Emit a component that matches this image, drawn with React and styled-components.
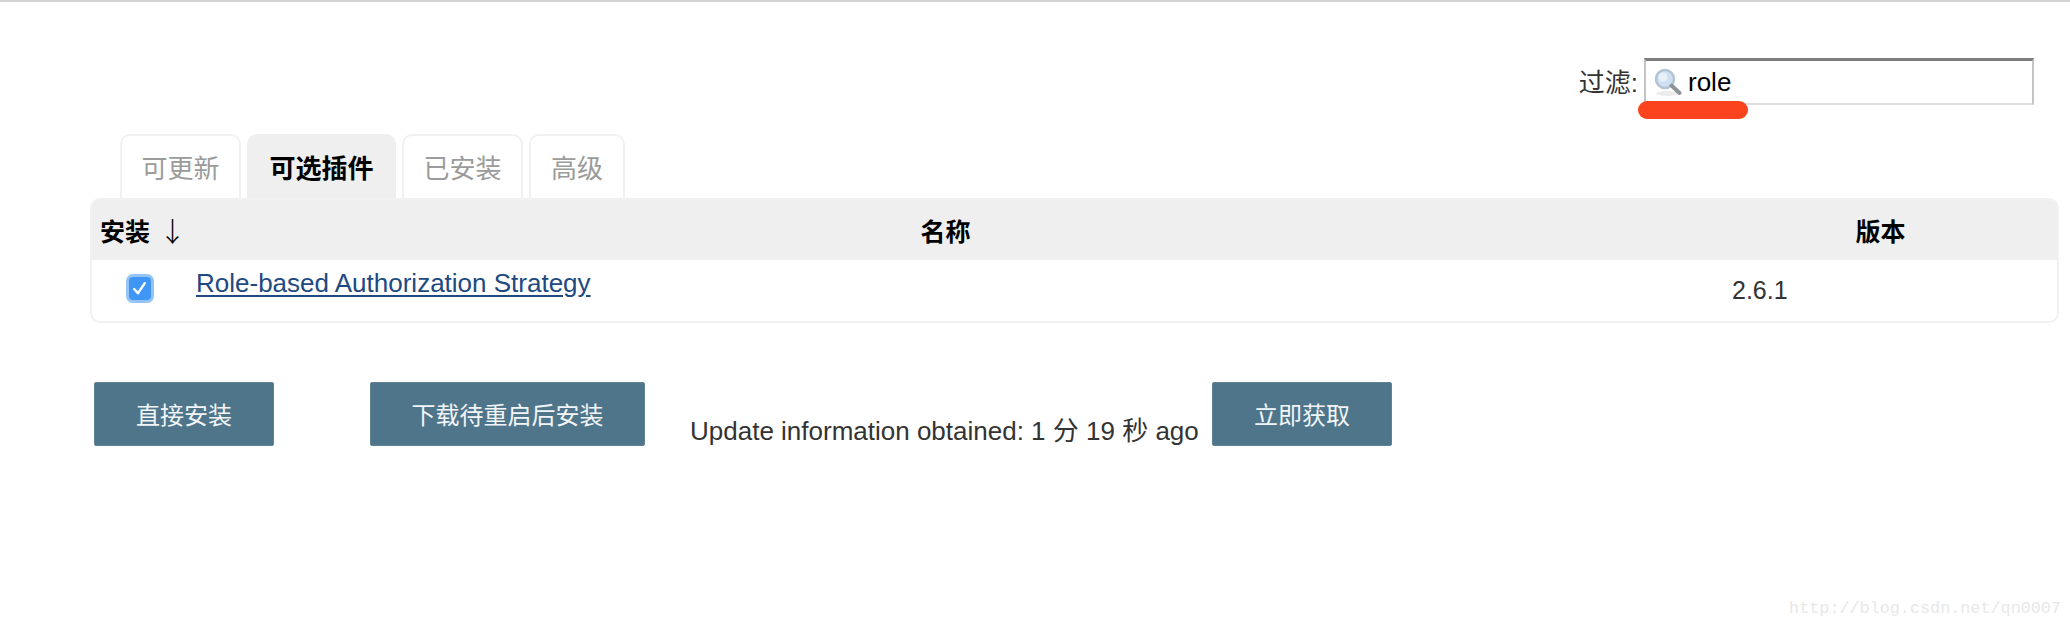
import React from "react";
import styled, { createGlobalStyle } from "styled-components";

const FONT = `"Liberation Sans", "Noto Sans CJK SC", sans-serif`;

const Global = createGlobalStyle`
  html, body { margin: 0; padding: 0; background: #fff; }
  body { font-family: ${FONT}; color: #333; }
`;

const Page = styled.div`
  position: relative;
  width: 2070px;
  height: 626px;
  overflow: hidden;
  box-sizing: border-box;
  border-top: 2px solid #d4d4d4;
  padding-top: 56px;
`;

const FilterBar = styled.div`
  display: flex;
  justify-content: flex-end;
  align-items: center;
  gap: 6px;
  padding-right: 36px;
  height: 47px;
  font-size: 26px;
  color: #333;
`;

const FilterLabel = styled.span`
  padding-bottom: 2px;
`;

const FilterBox = styled.div`
  position: relative;
  width: 390px;
  height: 47px;
  box-sizing: border-box;
  display: flex;
  align-items: center;
  gap: 5px;
  padding-left: 7px;
  border: 2px solid #c4c4c4;
  border-top: 3px solid #7d7d7d;
  border-bottom-color: #dcdcdc;
  color: #000;
  font-size: 26px;
  background: #fff;
`;

const Highlight = styled.span`
  position: absolute;
  left: -8px;
  top: 40px;
  width: 110px;
  height: 18px;
  border-radius: 9px;
  background: #fb431d;
`;

const Tabs = styled.div`
  display: flex;
  gap: 6px;
  margin: 29px 0 0 120px;
  height: 64px;
`;

const Tab = styled.div`
  box-sizing: border-box;
  height: 64px;
  width: ${(p) => p.$w}px;
  display: flex;
  justify-content: center;
  padding-top: 17px;
  font-size: 26px;
  line-height: 32px;
  border-radius: 10px 10px 0 0;
  border: 2px solid ${(p) => (p.$active ? "#efefef" : "#f1f1f1")};
  border-bottom: 0;
  background: ${(p) => (p.$active ? "#efefef" : "#fff")};
  color: ${(p) => (p.$active ? "#000" : "#9b9b9b")};
  font-weight: ${(p) => (p.$active ? 700 : 400)};
`;

const Table = styled.div`
  box-sizing: border-box;
  width: 1969px;
  height: 125px;
  margin-left: 90px;
  border: 2px solid #f1f1f1;
  border-radius: 10px;
  overflow: hidden;
`;

const HeaderRow = styled.div`
  display: grid;
  grid-template-columns: 95px 1517px 1fr;
  height: 60px;
  align-items: center;
  background: #efefef;
  color: #000;
  font-size: 25px;
  font-weight: 700;
`;

const HeadCell = styled.div`
  text-align: center;
`;

const InstallHead = styled.div`
  display: flex;
  align-items: center;
  gap: 9px;
  padding-left: 8px;
  white-space: nowrap;
`;

const Arrow = styled.span`
  font-family: "Noto Sans CJK SC", sans-serif;
  font-size: 27px;
  font-weight: 300;
  line-height: 1;
`;

const BodyRow = styled.div`
  display: grid;
  grid-template-columns: 95px 1517px 1fr;
  height: 61px;
`;

const CheckCell = styled.div`
  display: flex;
  justify-content: center;
  padding-top: 14px;
`;

const Check = styled.div`
  box-sizing: border-box;
  width: 28px;
  height: 29px;
  border-radius: 7px;
  background: #3f96f4;
  border: 3px solid #94c4f6;
  display: flex;
  align-items: center;
  justify-content: center;
`;

const NameCell = styled.div`
  padding: 7px 0 0 9px;
  font-size: 26px;
  line-height: 32px;
`;

const PluginLink = styled.a`
  color: #204a7f;
  text-decoration: underline;
  text-underline-offset: 3px;
`;

const VersionCell = styled.div`
  padding: 14px 0 0 28px;
  font-size: 25px;
  line-height: 32px;
  color: #333;
`;

const Actions = styled.div`
  display: flex;
  align-items: flex-end;
  margin: 59px 0 0 94px;
`;

const Button = styled.div`
  box-sizing: border-box;
  width: ${(p) => p.$w}px;
  height: 64px;
  margin-left: ${(p) => p.$ml || 0}px;
  display: flex;
  align-items: center;
  justify-content: center;
  background: #4f758b;
  border: 1px solid #5f8297;
  border-radius: 2px;
  color: #f2f5f7;
  font-size: 24px;
  padding-bottom: 2px;
`;

const Status = styled.div`
  margin: 0 0 -1px 45px;
  font-size: 26px;
  line-height: 32px;
  color: #333;
  white-space: nowrap;
  width: 522px;
`;

const Watermark = styled.div`
  position: absolute;
  right: 9px;
  bottom: 8px;
  font-family: "Liberation Mono", monospace;
  font-size: 16.8px;
  color: #e8e8e8;
`;

const MagnifierSvg = styled.svg`
  filter: blur(0.4px);
  flex: none;
`;

const Magnifier = () => (
  <MagnifierSvg width="30" height="30" viewBox="0 0 30 30" aria-hidden="true">
    <ellipse cx="14" cy="26.5" rx="11" ry="2.5" fill="#ececec" />
    <circle cx="12" cy="12" r="9" fill="#cfe0f2" stroke="#b3c3d3" strokeWidth="2.5" />
    <circle cx="10" cy="10" r="4.5" fill="#e8f1fa" />
    <path d="M18.5 18.5 L26.5 26" stroke="#8f9498" strokeWidth="4" strokeLinecap="round" />
  </MagnifierSvg>
);

const Tick = () => (
  <svg width="17" height="17" viewBox="0 0 16 16" aria-hidden="true">
    <path d="M3 8.5 L6.5 12.5 L13 3" fill="none" stroke="#fff" strokeWidth="2.2" strokeLinecap="round" strokeLinejoin="round" />
  </svg>
);

const tabs = [
  { label: "可更新", w: 121 },
  { label: "可选插件", w: 149, active: true },
  { label: "已安装", w: 121 },
  { label: "高级", w: 96 },
];

export default function App() {
  return (
    <Page>
      <Global />
      <FilterBar>
        <FilterLabel>过滤:</FilterLabel>
        <FilterBox>
          <Magnifier />
          <span>role</span>
          <Highlight />
        </FilterBox>
      </FilterBar>
      <Tabs>
        {tabs.map((t) => (
          <Tab key={t.label} $w={t.w} $active={t.active}>
            {t.label}
          </Tab>
        ))}
      </Tabs>
      <Table>
        <HeaderRow>
          <InstallHead>
            安装 <Arrow>↓</Arrow>
          </InstallHead>
          <HeadCell>名称</HeadCell>
          <HeadCell>版本</HeadCell>
        </HeaderRow>
        <BodyRow>
          <CheckCell>
            <Check>
              <Tick />
            </Check>
          </CheckCell>
          <NameCell>
            <PluginLink>Role-based Authorization Strategy</PluginLink>
          </NameCell>
          <VersionCell>2.6.1</VersionCell>
        </BodyRow>
      </Table>
      <Actions>
        <Button $w={180}>直接安装</Button>
        <Button $w={275} $ml={96}>下载待重启后安装</Button>
        <Status>Update information obtained: 1 分 19 秒 ago</Status>
        <Button $w={180}>立即获取</Button>
      </Actions>
      <Watermark>http://blog.csdn.net/qn0007</Watermark>
    </Page>
  );
}
